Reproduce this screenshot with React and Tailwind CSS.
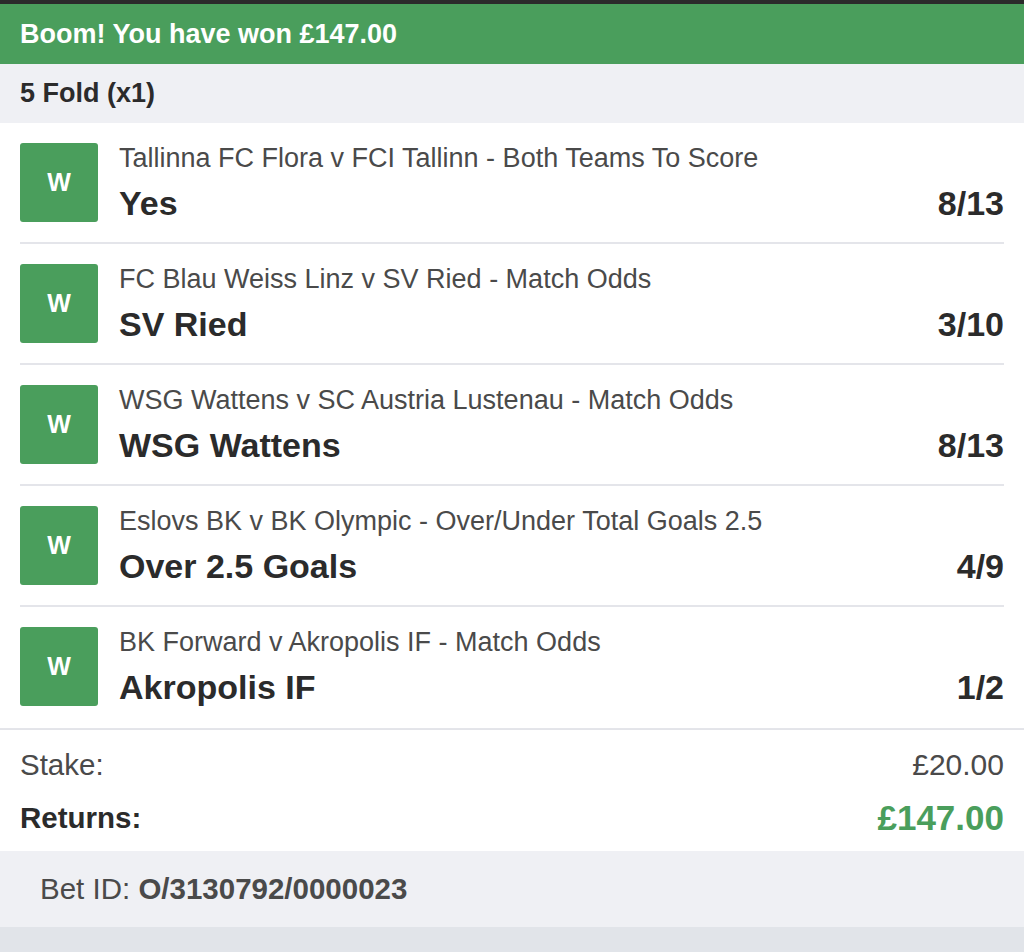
const legs = [
  { title: 'Tallinna FC Flora v FCI Tallinn - Both Teams To Score', pick: 'Yes', odds: '8/13' },
  { title: 'FC Blau Weiss Linz v SV Ried - Match Odds', pick: 'SV Ried', odds: '3/10' },
  { title: 'WSG Wattens v SC Austria Lustenau - Match Odds', pick: 'WSG Wattens', odds: '8/13' },
  { title: 'Eslovs BK v BK Olympic - Over/Under Total Goals 2.5', pick: 'Over 2.5 Goals', odds: '4/9' },
  { title: 'BK Forward v Akropolis IF - Match Odds', pick: 'Akropolis IF', odds: '1/2' },
]

function Leg({ leg, last }) {
  return (
    <div className={last ? 'mx-5 flex pt-5 pb-[22px]' : 'mx-5 flex border-b-2 border-[#e4e5ea] py-5'}>
      <div className="flex h-[79px] w-[78px] shrink-0 items-center justify-center rounded-[3px] bg-[#4a9e5c] text-[25px] font-bold text-white">
        W
      </div>
      <div className="ml-[21px] flex h-[79px] flex-1 flex-col">
        <div className="text-[27px] leading-[30px] text-[#4a4a4a]">{leg.title}</div>
        <div className="mt-[12px] flex items-baseline justify-between">
          <span className="text-[34px] font-bold leading-[37px] text-[#2b2b2b]">{leg.pick}</span>
          <span className="text-[34px] font-bold leading-[37px] text-[#2b2b2b]">{leg.odds}</span>
        </div>
      </div>
    </div>
  )
}

export default function App() {
  return (
    <div className="min-h-[952px] bg-[#e1e4e9] font-['Liberation_Sans',Arial,sans-serif]">
      <div className="h-1 bg-[#2b2b2b]" />
      <div className="flex h-[60px] items-center bg-[#4a9e5c] px-5 text-[27px] font-bold text-white">
        Boom! You have won £147.00
      </div>
      <div className="flex h-[59px] items-center bg-[#eff0f4] px-5 text-[27px] font-bold text-[#2b2b2b]">
        5 Fold (x1)
      </div>
      <div className="bg-white">
        <div className="border-b-2 border-[#e4e5ea]">
          {legs.map((leg, i) => (
            <Leg key={i} leg={leg} last={i === legs.length - 1} />
          ))}
        </div>
        <div className="flex flex-col gap-[17px] px-5 pt-[17px] pb-[15px] shadow-[0_2px_3px_rgba(0,0,0,0.12)]">
          <div className="flex items-center justify-between leading-[36px]">
            <span className="text-[29.5px] text-[#4a4a4a]">Stake:</span>
            <span className="text-[30px] text-[#4a4a4a]">£20.00</span>
          </div>
          <div className="flex items-center justify-between leading-[36px]">
            <span className="text-[29.5px] font-bold text-[#2b2b2b]">Returns:</span>
            <span className="text-[35px] font-bold text-[#4a9e5c]">£147.00</span>
          </div>
        </div>
      </div>
      <div className="flex h-[76px] items-center bg-[#eff0f4] pl-10 text-[29.5px] text-[#4a4a4a]">
        <span>Bet ID:&nbsp;</span>
        <span className="font-bold">O/3130792/0000023</span>
      </div>
    </div>
  )
}
